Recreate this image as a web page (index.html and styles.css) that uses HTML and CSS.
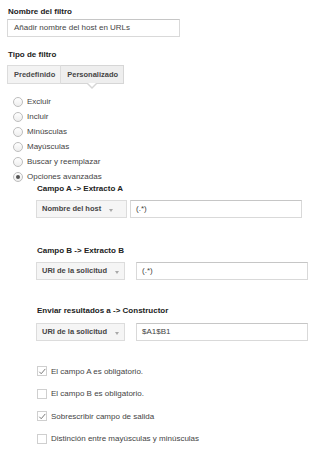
FILE: index.html
```html
<!DOCTYPE html>
<html lang="es">
<head>
<meta charset="utf-8">
<title>Filtro</title>
<link rel="stylesheet" href="styles.css">
</head>
<body>
<div class="page">
  <div class="label first">Nombre del filtro</div>
  <div class="text-input name-input">Añadir nombre del host en URLs</div>

  <div class="label type-label">Tipo de filtro</div>
  <div class="tabs">
    <div class="tab">Predefinido</div>
    <div class="tab active">Personalizado</div>
  </div>

  <ul class="radios">
    <li><span class="radio"></span>Excluir</li>
    <li><span class="radio"></span>Incluir</li>
    <li><span class="radio"></span>Minúsculas</li>
    <li><span class="radio"></span>Mayúsculas</li>
    <li><span class="radio"></span>Buscar y reemplazar</li>
    <li><span class="radio checked"></span>Opciones avanzadas</li>
  </ul>

  <div class="advanced">
    <div class="label sub">Campo A -&gt; Extracto A</div>
    <div class="field-row">
      <div class="select sel-host">Nombre del host<span class="arrow"></span></div>
      <div class="text-input row-input gap-small">(.*)</div>
    </div>

    <div class="label sub sub-b">Campo B -&gt; Extracto B</div>
    <div class="field-row">
      <div class="select sel-uri">URI de la solicitud<span class="arrow"></span></div>
      <div class="text-input row-input gap-large">(.*)</div>
    </div>

    <div class="label sub sub-c">Enviar resultados a -&gt; Constructor</div>
    <div class="field-row row-c">
      <div class="select sel-uri">URI de la solicitud<span class="arrow"></span></div>
      <div class="text-input row-input gap-large">$A1$B1</div>
    </div>

    <ul class="checks">
      <li><span class="check on"><svg viewBox="0 0 9 9" width="9" height="9"><path d="M1.5 4.8 L3.6 7 L8.2 1.6" fill="none" stroke="#6a6a6a" stroke-width="1"/></svg></span>El campo A es obligatorio.</li>
      <li><span class="check"></span>El campo B es obligatorio.</li>
      <li><span class="check on"><svg viewBox="0 0 9 9" width="9" height="9"><path d="M1.5 4.8 L3.6 7 L8.2 1.6" fill="none" stroke="#6a6a6a" stroke-width="1"/></svg></span>Sobrescribir campo de salida</li>
      <li><span class="check"></span>Distinción entre mayúsculas y minúsculas</li>
    </ul>
  </div>
</div>
</body>
</html>
```

FILE: styles.css
```css
html, body {
  margin: 0;
  padding: 0;
  background: #ffffff;
}

body {
  font-family: "Liberation Sans", Arial, sans-serif;
  font-size: 8px;
  color: #444444;
}

.page {
  display: flex;
  flex-direction: column;
  align-items: flex-start;
  padding: 7px 0 0 7px;
}

.label {
  font-weight: bold;
  font-size: 8px;
  line-height: 10px;
  color: #222222;
  padding-left: 1px;
}

.text-input {
  box-sizing: border-box;
  height: 18px;
  line-height: 16px;
  border: 1px solid #d9d9d9;
  border-top-color: #c6c6c6;
  padding: 0 6px;
  color: #444444;
  background: #ffffff;
  white-space: nowrap;
}

.name-input {
  margin-top: 2px;
  width: 173px;
}

.type-label {
  margin-top: 13px;
}

.tabs {
  display: flex;
  margin-top: 5px;
  position: relative;
}

.tab {
  box-sizing: border-box;
  height: 19px;
  line-height: 17px;
  padding: 0 5px 0 6px;
  border: 1px solid #dcdcdc;
  background: #f3f3f3;
  font-weight: bold;
  font-size: 7.5px;
  color: #4a4a4a;
}

.tab + .tab {
  border-left: none;
}

.tab.active {
  position: relative;
  background: #eeeeee;
  border-color: #d6d6d6;
  color: #444444;
}

.tab.active::before,
.tab.active::after {
  content: "";
  position: absolute;
  left: 50%;
  width: 0;
  height: 0;
  border-style: solid;
  border-color: transparent;
}

.tab.active::before {
  top: 18px;
  margin-left: -5px;
  border-width: 5px 5px 0 5px;
  border-top-color: #d6d6d6;
}

.tab.active::after {
  top: 17px;
  margin-left: -4px;
  border-width: 4px 4px 0 4px;
  border-top-color: #ffffff;
}

.radios {
  list-style: none;
  margin: 10px 0 0 0;
  padding: 0 0 0 6px;
}

.radios li {
  display: flex;
  align-items: center;
  height: 15px;
  color: #444444;
}

.radio {
  box-sizing: border-box;
  width: 10px;
  height: 10px;
  border-radius: 50%;
  border: 1px solid #bdbdbd;
  background: linear-gradient(#ffffff, #eeeeee);
  margin-right: 4px;
  display: flex;
  align-items: center;
  justify-content: center;
}

.radio.checked::after {
  content: "";
  width: 4px;
  height: 4px;
  border-radius: 50%;
  background: #555555;
}

.advanced {
  display: flex;
  flex-direction: column;
  align-items: flex-start;
  padding-left: 29px;
}

.sub {
  margin-top: 0;
}

.sub-b {
  margin-top: 28px;
}

.sub-c {
  margin-top: 26px;
}

.field-row {
  display: flex;
  margin-top: 6px;
}

.row-c {
  margin-top: 7px;
}

.select {
  box-sizing: border-box;
  height: 18px;
  line-height: 16px;
  border: 1px solid #dcdcdc;
  background: #f5f5f5;
  font-weight: bold;
  font-size: 7.5px;
  color: #444444;
  padding-left: 5px;
  white-space: nowrap;
  display: flex;
  align-items: center;
}

.sel-host {
  width: 91px;
}

.sel-uri {
  width: 89px;
}

.arrow {
  display: block;
  margin-left: 8px;
  margin-top: 2px;
  width: 0;
  height: 0;
  border-left: 2.5px solid transparent;
  border-right: 2.5px solid transparent;
  border-top: 3px solid #a8a8a8;
}

.row-input {
  width: 172px;
  padding: 0 5px;
}

.gap-small {
  margin-left: 3px;
}

.gap-large {
  margin-left: 11px;
}

.checks {
  list-style: none;
  margin: 19px 0 0 0;
  padding: 0 0 0 1px;
  display: flex;
  flex-direction: column;
  gap: 0.5px;
}

.checks li {
  display: flex;
  align-items: center;
  height: 22px;
  color: #444444;
}

.check {
  box-sizing: border-box;
  width: 10px;
  height: 10px;
  border: 1px solid #cfcfcf;
  background: #ffffff;
  margin-right: 4px;
  display: flex;
  align-items: center;
  justify-content: center;
}

.check svg {
  display: block;
}
```
